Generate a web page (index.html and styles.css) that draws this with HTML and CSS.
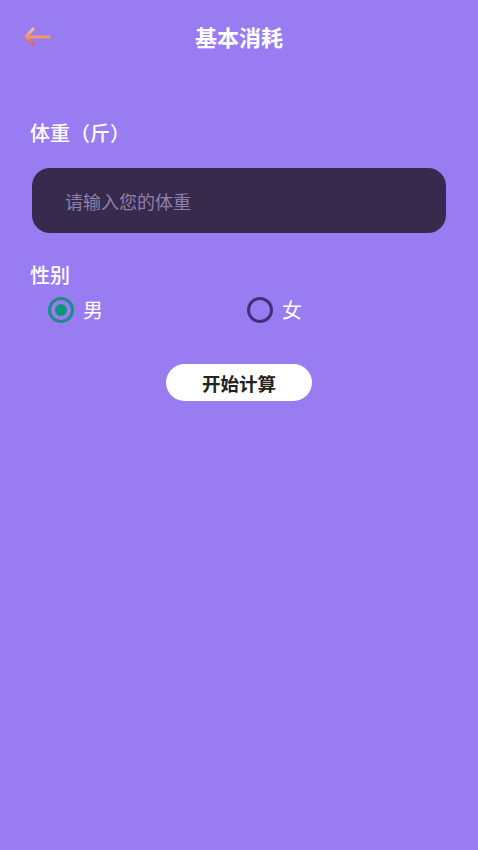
FILE: index.html
```html
<!DOCTYPE html>
<html lang="zh">
<head>
<meta charset="utf-8">
<link rel="stylesheet" href="styles.css">
</head>
<body>
<div class="page">
  <header class="topbar">
    <span class="back">
      <svg width="28" height="20" viewBox="0 0 28 20">
        <defs>
          <linearGradient id="g" x1="0" y1="0" x2="0" y2="1">
            <stop offset="0" stop-color="#f6c08a"/>
            <stop offset="1" stop-color="#e8604a"/>
          </linearGradient>
        </defs>
        <path d="M10 2 L3 10 L10 17" fill="none" stroke="url(#g)" stroke-width="3" stroke-linecap="round" stroke-linejoin="round"/>
        <path d="M5 10 H26" fill="none" stroke="#ee9a64" stroke-width="3" stroke-linecap="round"/>
      </svg>
    </span>
    <h1 class="title">基本消耗</h1>
  </header>
  <div class="label weight-label">体重（斤）</div>
  <div class="input-box"><span class="placeholder">请输入您的体重</span></div>
  <div class="label sex-label">性别</div>
  <div class="radios">
    <div class="radio-item"><span class="radio checked"><span class="dot"></span></span><span class="radio-text">男</span></div>
    <div class="radio-item"><span class="radio"></span><span class="radio-text">女</span></div>
  </div>
  <div class="btn-row"><button class="btn">开始计算</button></div>
</div>
</body>
</html>
```
FILE: styles.css
```css
html, body {
  margin: 0;
  padding: 0;
  background: #9a7cf2;
}
body {
  font-family: "Noto Sans CJK SC", "Noto Sans", sans-serif;
  color: #fff;
}
.page {
  width: 478px;
  height: 850px;
  background: #9a7cf2;
}
.topbar {
  position: relative;
  height: 72px;
  display: flex;
  align-items: center;
  justify-content: center;
}
.back {
  position: absolute;
  left: 23px;
  top: 27px;
  width: 28px;
  height: 20px;
}
.back svg { display: block; }
.title {
  margin: 0;
  font-size: 22px;
  font-weight: 700;
  line-height: 28px;
  color: #fff;
}
.label {
  font-size: 20px;
  line-height: 26px;
  padding-left: 30px;
  font-weight: 500;
}
.weight-label {
  margin-top: 48px;
}
.input-box {
  margin: 22px 32px 0 32px;
  height: 65px;
  border-radius: 18px;
  background: #372b4d;
  display: flex;
  align-items: center;
  padding-left: 33px;
}
.placeholder {
  font-size: 18px;
  color: #8c80a8;
}
.sex-label {
  margin-top: 29px;
}
.radios {
  display: flex;
  margin-top: 7px;
  padding-left: 48px;
}
.radio-item {
  display: flex;
  align-items: center;
  width: 199px;
  height: 30px;
}
.radio {
  width: 26px;
  height: 26px;
  box-sizing: border-box;
  border-radius: 50%;
  border: 3px solid #40307c;
  display: flex;
  align-items: center;
  justify-content: center;
}
.radio.checked {
  border-color: #1f8a8c;
}
.dot {
  width: 12px;
  height: 12px;
  border-radius: 50%;
  background: #0c9676;
}
.radio-text {
  margin-left: 9px;
  font-size: 20px;
  line-height: 26px;
}
.btn-row {
  display: flex;
  justify-content: center;
  margin-top: 39px;
}
.btn {
  width: 146px;
  height: 37px;
  border: none;
  border-radius: 19px;
  background: #fff;
  font-family: "Noto Sans CJK SC", sans-serif;
  font-size: 18.5px;
  font-weight: 700;
  color: #222;
  padding: 0;
}
```
